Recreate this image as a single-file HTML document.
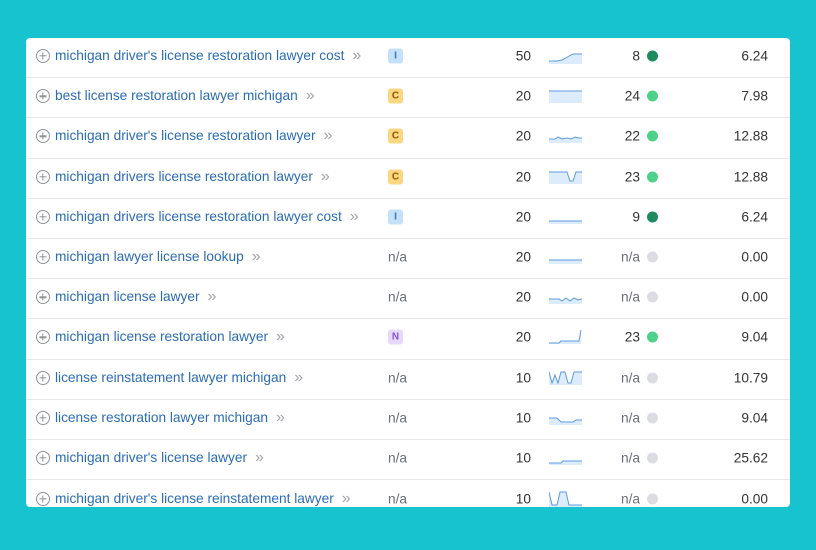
<!DOCTYPE html>
<html><head><meta charset="utf-8">
<style>
*{margin:0;padding:0;box-sizing:border-box}
body{width:816px;height:550px;background:#16c3ce;font-family:"Liberation Sans",sans-serif;position:relative;overflow:hidden}
.card{position:absolute;left:26px;top:38px;width:764px;height:469px;background:#fff;border-radius:4px;overflow:hidden}
.row{position:absolute;left:0;width:764px;height:40.2px;border-bottom:1px solid #e6e8ec;font-size:13.7px;color:#333}
.row>*{position:absolute;top:calc(50% - 1.5px);transform:translateY(-50%)}
.plus{left:10px;width:14px;height:14px;border:1.4px solid #8e9299;border-radius:50%}
.plus:before,.plus:after{content:"";position:absolute;background:#8e9299;left:50%;top:50%;transform:translate(-50%,-50%)}
.plus:before{width:7px;height:1.4px}.plus:after{width:1.4px;height:7px}
.kw{left:29px;color:#2b6cb5;white-space:nowrap}
.kw span{color:#a0a4aa;margin-left:8px;font-size:16px}
.badge{left:362px;width:15px;height:15px;border-radius:3px;font-size:10px;font-weight:bold;text-align:center;line-height:15px}
.I{background:#c5e1fa;color:#3373c4}.C{background:#fcd680;color:#8a5a00}.N{background:#e6dafb;color:#8b4fd6}
.na{left:362px;color:#6b6f76}
.vol{right:259px;color:#333}
.sp{left:523px;width:33px;height:16px}
.kd{right:150px;color:#333}
.kd.n{color:#6b6f76}
.dot{left:621px;width:11px;height:11px;border-radius:50%}
.cpc{right:22px;color:#333}
</style></head><body>
<div class="card">
<div class="row" style="top:0"><div class="plus"></div><div class="kw">michigan driver's license restoration lawyer cost<span>»</span></div><div class="badge I">I</div><div class="vol">50</div><svg class="sp" viewBox="0 0 33 16"><path d="M0 13 L8 13 L13 12 L17 10 L20 8 L24 6 L33 6 L33 16 L0 16Z" fill="#dcecfb"/><path d="M0 13 L8 13 L13 12 L17 10 L20 8 L24 6 L33 6" fill="none" stroke="#5b9be0" stroke-width="1"/></svg><div class="kd">8</div><div class="dot" style="background:#1e8a5e"></div><div class="cpc">6.24</div></div>

<div class="row" style="top:40.2px"><div class="plus"></div><div class="kw">best license restoration lawyer michigan<span>»</span></div><div class="badge C">C</div><div class="vol">20</div><svg class="sp" viewBox="0 0 33 16"><path d="M0 3 L33 3 L33 15 L0 15Z" fill="#dcecfb"/><path d="M0 3 L33 3" stroke="#5b9be0" stroke-width="1"/></svg><div class="kd">24</div><div class="dot" style="background:#4fd08b"></div><div class="cpc">7.98</div></div>

<div class="row" style="top:80.4px"><div class="plus"></div><div class="kw">michigan driver's license restoration lawyer<span>»</span></div><div class="badge C">C</div><div class="vol">20</div><svg class="sp" viewBox="0 0 33 16"><path d="M0 11 L6 11 L9 9 L13 11 L18 10 L22 11 L26 9 L30 10 L33 10 L33 15 L0 15Z" fill="#dcecfb"/><path d="M0 11 L6 11 L9 9 L13 11 L18 10 L22 11 L26 9 L30 10 L33 10" fill="none" stroke="#5b9be0"/></svg><div class="kd">22</div><div class="dot" style="background:#4fd08b"></div><div class="cpc">12.88</div></div>

<div class="row" style="top:120.6px"><div class="plus"></div><div class="kw">michigan drivers license restoration lawyer<span>»</span></div><div class="badge C">C</div><div class="vol">20</div><svg class="sp" viewBox="0 0 33 16"><path d="M0 3 L18 3 L21 12 L24 12 L27 3 L33 3 L33 15 L0 15Z" fill="#dcecfb"/><path d="M0 3 L18 3 L21 12 L24 12 L27 3 L33 3" fill="none" stroke="#5b9be0"/></svg><div class="kd">23</div><div class="dot" style="background:#4fd08b"></div><div class="cpc">12.88</div></div>

<div class="row" style="top:160.8px"><div class="plus"></div><div class="kw">michigan drivers license restoration lawyer cost<span>»</span></div><div class="badge I">I</div><div class="vol">20</div><svg class="sp" viewBox="0 0 33 16"><path d="M0 12 L33 12 L33 15 L0 15Z" fill="#dcecfb"/><path d="M0 12 L33 12" stroke="#5b9be0"/></svg><div class="kd">9</div><div class="dot" style="background:#1e8a5e"></div><div class="cpc">6.24</div></div>

<div class="row" style="top:201px"><div class="plus"></div><div class="kw">michigan lawyer license lookup<span>»</span></div><div class="na">n/a</div><div class="vol">20</div><svg class="sp" viewBox="0 0 33 16"><path d="M0 11 L33 11 L33 15 L0 15Z" fill="#dcecfb"/><path d="M0 11 L33 11" stroke="#5b9be0"/></svg><div class="kd n">n/a</div><div class="dot" style="background:#dcdde3"></div><div class="cpc">0.00</div></div>

<div class="row" style="top:241.2px"><div class="plus"></div><div class="kw">michigan license lawyer<span>»</span></div><div class="na">n/a</div><div class="vol">20</div><svg class="sp" viewBox="0 0 33 16"><path d="M0 10 L10 10 L13 12 L17 9 L21 12 L25 9 L29 11 L33 10 L33 15 L0 15Z" fill="#dcecfb"/><path d="M0 10 L10 10 L13 12 L17 9 L21 12 L25 9 L29 11 L33 10" fill="none" stroke="#5b9be0"/></svg><div class="kd n">n/a</div><div class="dot" style="background:#dcdde3"></div><div class="cpc">0.00</div></div>

<div class="row" style="top:281.4px"><div class="plus"></div><div class="kw">michigan license restoration lawyer<span>»</span></div><div class="badge N">N</div><div class="vol">20</div><svg class="sp" viewBox="0 0 33 16"><path d="M0 14 L10 14 L12 12 L30 12 L32 1 L32 15 L0 15Z" fill="#dcecfb"/><path d="M0 14 L10 14 L12 12 L30 12 L32 1" fill="none" stroke="#5b9be0"/></svg><div class="kd">23</div><div class="dot" style="background:#4fd08b"></div><div class="cpc">9.04</div></div>

<div class="row" style="top:321.6px"><div class="plus"></div><div class="kw">license reinstatement lawyer michigan<span>»</span></div><div class="na">n/a</div><div class="vol">10</div><svg class="sp" viewBox="0 0 33 16"><path d="M0 2 L3 13 L6 5 L9 13 L12 2 L16 2 L19 13 L22 13 L25 2 L33 2 L33 15 L0 15Z" fill="#dcecfb"/><path d="M0 2 L3 13 L6 5 L9 13 L12 2 L16 2 L19 13 L22 13 L25 2 L33 2" fill="none" stroke="#5b9be0"/></svg><div class="kd n">n/a</div><div class="dot" style="background:#dcdde3"></div><div class="cpc">10.79</div></div>

<div class="row" style="top:361.8px"><div class="plus"></div><div class="kw">license restoration lawyer michigan<span>»</span></div><div class="na">n/a</div><div class="vol">10</div><svg class="sp" viewBox="0 0 33 16"><path d="M0 8 L8 8 L12 12 L24 12 L27 10 L33 10 L33 15 L0 15Z" fill="#dcecfb"/><path d="M0 8 L8 8 L12 12 L24 12 L27 10 L33 10" fill="none" stroke="#5b9be0"/></svg><div class="kd n">n/a</div><div class="dot" style="background:#dcdde3"></div><div class="cpc">9.04</div></div>

<div class="row" style="top:402px"><div class="plus"></div><div class="kw">michigan driver's license lawyer<span>»</span></div><div class="na">n/a</div><div class="vol">10</div><svg class="sp" viewBox="0 0 33 16"><path d="M0 13 L12 13 L14 11 L33 11 L33 15 L0 15Z" fill="#dcecfb"/><path d="M0 13 L12 13 L14 11 L33 11" fill="none" stroke="#5b9be0"/></svg><div class="kd n">n/a</div><div class="dot" style="background:#dcdde3"></div><div class="cpc">25.62</div></div>

<div class="row" style="top:442.2px;border-bottom:none"><div class="plus"></div><div class="kw">michigan driver's license reinstatement lawyer<span>»</span></div><div class="na">n/a</div><div class="vol">10</div><svg class="sp" viewBox="0 0 33 16"><path d="M0 1 L3 14 L8 14 L11 1 L17 1 L20 14 L33 14 L33 16 L0 16Z" fill="#dcecfb"/><path d="M0 1 L3 14 L8 14 L11 1 L17 1 L20 14 L33 14" fill="none" stroke="#5b9be0"/></svg><div class="kd n">n/a</div><div class="dot" style="background:#dcdde3"></div><div class="cpc">0.00</div></div>
</div>
</body></html>
